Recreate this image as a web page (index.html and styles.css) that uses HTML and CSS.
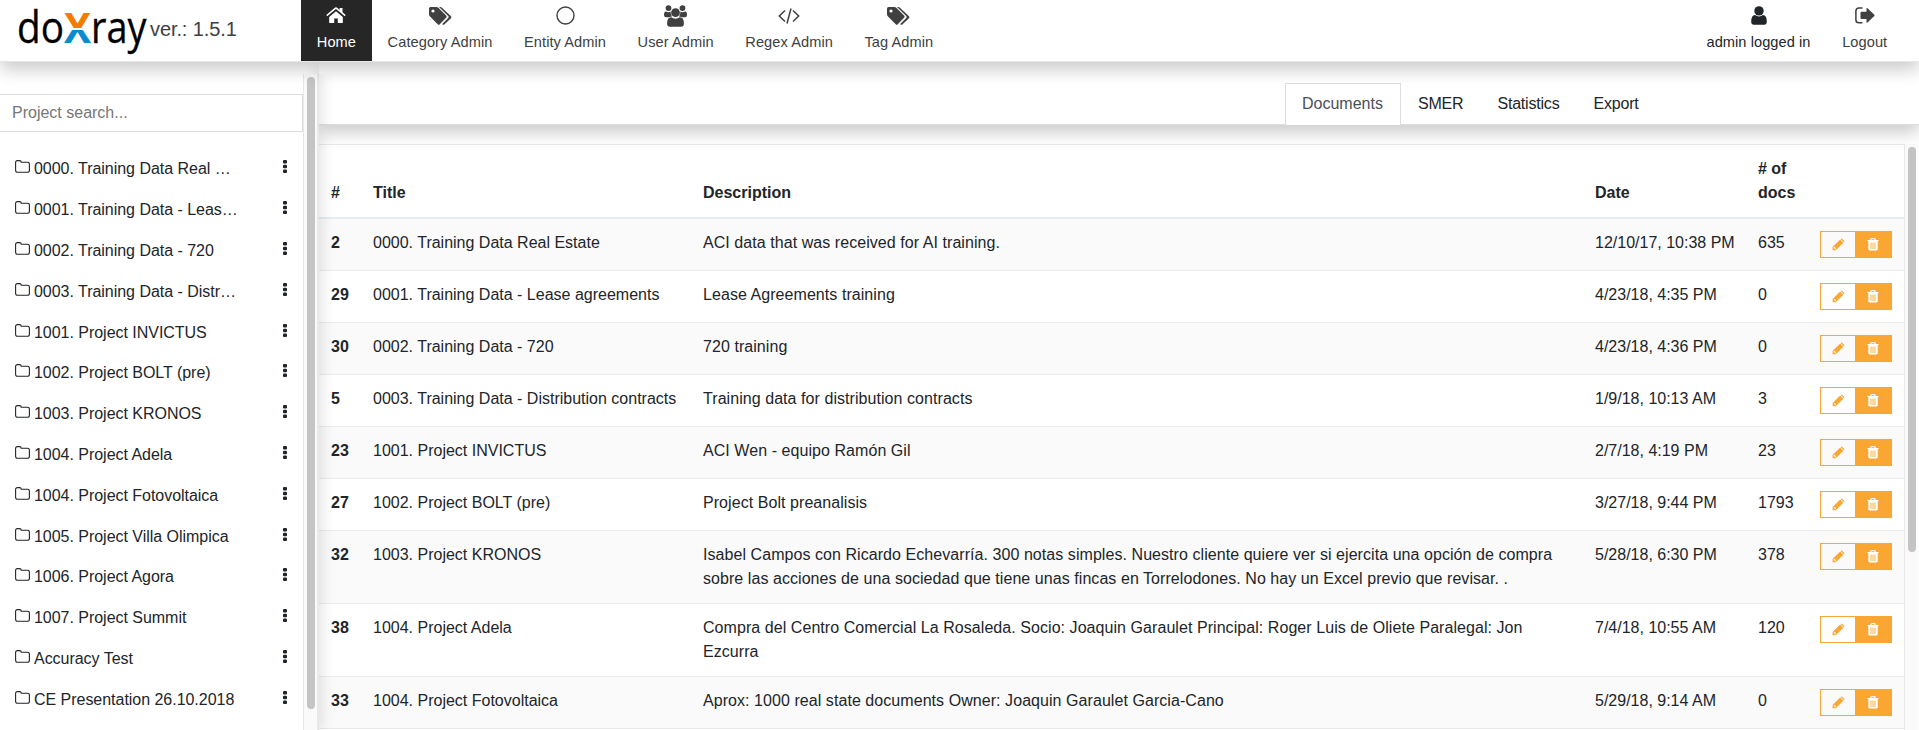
FILE: index.html
```html
<!DOCTYPE html>
<html lang="en">
<head>
<meta charset="utf-8">
<title>doXray</title>
<link rel="stylesheet" href="styles.css">
</head>
<body>
<svg class="sprite" aria-hidden="true">
  <symbol id="folder" viewBox="0 0 15 13"><path d="M.6 2.5Q.6.6 2.500.6H4.600Q6.200.6 6.200 2.300H12.300Q14.400 2.300 14.400 4.200V10.200Q14.400 12.300 12.300 12.300H2.600Q.6 12.300.6 10.200Z" fill="none" stroke="currentColor" stroke-width="1.100"/></symbol>
  <symbol id="dots" viewBox="0 0 4 13"><rect width="4" height="3.600" rx="1.100"/><rect y="4.700" width="4" height="3.600" rx="1.100"/><rect y="9.400" width="4" height="3.600" rx="1.100"/></symbol>
  <symbol id="home" viewBox="0 0 20 17"><path d="M10 4.200 3.200 10V15.400Q3.200 16 3.800 16H8.200V11.500H11.800V16H16.200Q16.800 16 16.800 15.400V10Z"/><path d="M10 .3Q10.600.3 11.200.8L13.600 2.900V1H16.500V5.300L19.700 8 18.800 9.200 10 2.100 1.200 9.200.3 8 8.800.8Q9.400.3 10 .3Z"/></symbol>
  <symbol id="tags" viewBox="0 0 23 18"><path fill-rule="evenodd" d="M1.500 0H7.400Q8.500 0 9.300.8L17.100 8.600Q18.100 9.700 17.100 10.700L10.800 17.200Q9.800 18.200 8.700 17.200L.8 9.300Q0 8.500 0 7.300V1.500Q0 0 1.500 0ZM4 2.400A1.600 1.600 0 1 0 4 5.600 1.600 1.600 0 1 0 4 2.400Z"/><path d="M10 0H11.200Q12.300.1 13.200.9L21.700 8.900Q23 10.200 21.900 11.300L15.600 17.300Q14.600 18.200 13.600 17.500L13.200 17.100 19.200 11Q20.100 10 19.200 9Z"/></symbol>
  <symbol id="circle" viewBox="0 0 19 19"><circle cx="9.500" cy="9.500" r="8.500" fill="none" stroke="currentColor" stroke-width="1.400"/></symbol>
  <symbol id="users" viewBox="0 0 23 22"><circle cx="4.500" cy="3.100" r="2.900"/><circle cx="18.500" cy="3.100" r="2.900"/><path d="M1.900 6.400Q4.500 8 6.600 6.500 6.300 9.500 8 11.500 6.500 11.600 5.400 12.300H2Q0 12.300 0 10 0 6.300 1.900 6.400ZM21.100 6.400Q18.500 8 16.400 6.500 16.700 9.500 15 11.500 16.500 11.600 17.600 12.300H21Q23 12.300 23 10 23 6.300 21.100 6.400Z"/><circle cx="11.500" cy="7.700" r="4.400"/><path d="M7.200 12.300Q11.500 15.200 15.800 12.300 19.900 12.300 19.900 18.500 19.900 21.800 17 21.800H6Q3.100 21.800 3.100 18.500 3.100 12.300 7.200 12.300Z"/></symbol>
  <symbol id="code" viewBox="0 0 22 16"><path d="M7 2.500 1.300 8 7 13.500M15 2.500 20.700 8 15 13.500M13 .5 9 15.500" fill="none" stroke="currentColor" stroke-width="1.500"/></symbol>
  <symbol id="user" viewBox="0 0 16 19"><circle cx="8" cy="4.900" r="4.700"/><path d="M4 9.100Q8 12 12 9.100 15.800 9.500 15.800 15.500 15.800 18.700 13 18.700H3Q.2 18.700.2 15.500.2 9.500 4 9.100Z"/></symbol>
  <symbol id="logout" viewBox="0 0 20 17"><path d="M7.500.9H4Q.9.900.9 4V12.700Q.9 15.800 4 15.800H7.500" fill="none" stroke="currentColor" stroke-width="1.500"/><path d="M5.500 5.500Q5.500 4.700 6.300 4.700H11.500V1.500Q11.500.5 12.500 1.200L19.300 7.700Q19.900 8.300 19.300 8.900L12.500 15.500Q11.500 16.200 11.500 15.200V12H6.300Q5.500 12 5.500 11.200Z"/></symbol>
  <symbol id="pencil" viewBox="0 0 13 13"><path fill-rule="evenodd" d="M.6 9.100 8.100 1.600 11.300 4.800 3.800 12.300H.6ZM1.700 9.500V10.200H2.700V11.200H3.400L4.100 10.500 2.400 8.800ZM8.800.9Q9.600.1 10.400.9L12 2.500Q12.800 3.300 12 4.100L11.900 4.200 8.700 1Z"/></symbol>
  <symbol id="trash" viewBox="0 0 12 13"><path d="M3.800 2V1.500Q3.800.6 4.700.6H7.300Q8.200.6 8.200 1.500V2M.5 2.500H11.500" fill="none" stroke="currentColor" stroke-width="1.200"/><path d="M1.300 3H10.700V11Q10.700 12.500 9.400 12.500H2.600Q1.300 12.500 1.300 11Z"/><path d="M3 4.500H9V11H3Z" fill="#fdd8a2"/></symbol>
</svg>

<header class="navbar">
  <div class="brand">
    <svg class="logo" width="134" height="61" viewBox="0 0 134 61">
      <defs><linearGradient id="split" gradientUnits="userSpaceOnUse" x1="0" y1="14" x2="0" y2="44">
        <stop offset=".46" stop-color="#f07d00"/><stop offset=".46" stop-color="#fff"/><stop offset=".53" stop-color="#fff"/><stop offset=".53" stop-color="#0a8bd0"/>
      </linearGradient></defs>
      <text class="logo-text" y="43"><tspan x="1" textLength="47" lengthAdjust="spacingAndGlyphs">do</tspan><tspan class="logo-x" x="48" textLength="27" lengthAdjust="spacingAndGlyphs">X</tspan><tspan x="75" textLength="55.500" lengthAdjust="spacingAndGlyphs">ray</tspan></text>
    </svg>
    <span class="version">ver.: 1.5.1</span>
  </div>
  <nav class="menu">
    <a class="item active"><svg width="20" height="17"><use href="#home"/></svg><span>Home</span></a>
    <a class="item"><svg width="23" height="18"><use href="#tags"/></svg><span>Category Admin</span></a>
    <a class="item"><svg width="19" height="19"><use href="#circle"/></svg><span>Entity Admin</span></a>
    <a class="item"><svg width="23" height="22"><use href="#users"/></svg><span>User Admin</span></a>
    <a class="item"><svg width="22" height="16"><use href="#code"/></svg><span>Regex Admin</span></a>
    <a class="item"><svg width="23" height="18"><use href="#tags"/></svg><span>Tag Admin</span></a>
  </nav>
  <nav class="menu account">
    <a class="item dark"><svg width="16" height="19"><use href="#user"/></svg><span>admin logged in</span></a>
    <a class="item"><svg width="20" height="17"><use href="#logout"/></svg><span>Logout</span></a>
  </nav>
</header>

<div class="page">
  <aside class="sidebar">
    <div class="projects">
      <input class="search" type="text" placeholder="Project search...">
      <ul class="project-list" id="projects"></ul>
    </div>
    <div class="track"><div class="thumb side-thumb"></div></div>
  </aside>
  <main class="content">
    <nav class="tabs"><a class="tab current">Documents</a><a class="tab">SMER</a><a class="tab">Statistics</a><a class="tab">Export</a></nav>
    <div class="table-area">
      <table class="docs">
        <colgroup><col class="c-id"><col class="c-title"><col class="c-desc"><col class="c-date"><col class="c-count"><col class="c-act"></colgroup>
        <thead><tr><th>#</th><th>Title</th><th>Description</th><th>Date</th><th># of docs</th><th></th></tr></thead>
        <tbody id="rows"></tbody>
      </table>
      <div class="track"><div class="thumb main-thumb"></div></div>
    </div>
  </main>
</div>
<script src="app.js"></script>
</body>
</html>
```
FILE: styles.css
```css
* { box-sizing: border-box; }
body { margin: 0; height: 730px; overflow: hidden; display: flex; flex-direction: column; font: 16px/24px "Liberation Sans", Arial, sans-serif; color: #212529; background: #fff; }
svg { fill: currentColor; display: block; }
.sprite { display: none; }

.navbar { position: relative; z-index: 3; flex: none; display: flex; height: 62px; background: #fff; border-bottom: 1px solid #e7e7e7; box-shadow: 0 8px 16px rgba(0, 0, 0, .2); }
.brand { display: flex; width: 301px; padding-left: 16px; }
.logo { flex: none; overflow: visible; }
.logo-text { font: 43px "Open Sans", sans-serif; fill: #000; stroke: #000; stroke-width: .3px; }
.logo-x { font-weight: bold; font-size: 41px; fill: url(#split); stroke: none; }
.version { font-size: 20px; line-height: 58px; letter-spacing: -.1px; color: #404040; }
.menu { display: flex; }
.account { margin-left: auto; padding-right: 16px; }
.item { display: flex; flex-direction: column; height: 61px; padding: 0 15.800px; font-size: 14.600px; letter-spacing: .07px; color: #404040; }
.item svg { margin: auto; }
.item span { height: 30px; line-height: 22px; }
.item.active { background: #262626; color: #fff; }
.item.dark { color: #212529; }

.page { flex: 1; min-height: 0; display: flex; }
.sidebar { position: relative; z-index: 2; flex: none; display: flex; width: 319px; margin-top: 12px; border-right: 2px solid #e8e8e8; box-shadow: 4px 0 12px rgba(0, 0, 0, .1); clip-path: inset(0 -20px 0 0); background: #fff; }
.projects { width: 303px; padding-top: 20px; }
.search { display: block; width: 303px; height: 38px; padding: 0 12px; border: 1px solid #ddd; border-left: 0; font: inherit; color: #777; }
.search::placeholder { color: #777; }
.project-list { list-style: none; margin: 0; padding: 17px 16px 0 15px; }
.project { display: flex; align-items: center; height: 40.800px; }
.project span { margin-left: 4px; letter-spacing: -.03px; }
.project .dots { margin: -5px 0 0 auto; }
.project .folder { margin-top: -5px; }
.track { flex: none; width: 14px; padding-top: 3px; background: #fafafa; border-left: 1px solid #e8e8e8; }
.thumb { width: 8px; margin-left: 3px; border-radius: 4px; background: #c4c4c4; }
.side-thumb { height: 632px; }
.main-thumb { height: 405px; }

.content { flex: 1; min-width: 0; display: flex; flex-direction: column; }
.tabs { position: relative; z-index: 1; flex: none; display: flex; align-items: flex-end; height: 63px; padding-left: 966px; border-bottom: 1px solid #ddd; background: #fff; box-shadow: 0 8px 16px rgba(0, 0, 0, .2); }
.tab { height: 41px; padding: 8px 16px; border: 1px solid transparent; }
.tab.current { width: 116px; white-space: nowrap; height: 42px; margin-bottom: -1px; border-color: #ddd; border-bottom: 0; background: #fff; color: #495057; }
.tab:not(.current) { letter-spacing: -.2px; }
.table-area { flex: 1; min-height: 0; margin-top: 19px; display: flex; align-items: stretch; overflow: hidden; }
.docs { flex: none; align-self: flex-start; width: 1585px; table-layout: fixed; border-spacing: 0; border-top: 1px solid #e9ecef; }
.c-id { width: 42px; } .c-title { width: 330px; } .c-desc { width: 892px; } .c-date { width: 163px; } .c-count { width: 62px; } .c-act { width: 96px; }
.docs th, .docs td { padding: 12px 12px 0; text-align: left; vertical-align: top; border-bottom: 1px solid #e9ecef; }
.docs thead th { height: 74px; padding-bottom: 12px; vertical-align: bottom; border-bottom-width: 2px; }
.docs tbody tr { height: 52px; }
.docs tbody tr.tall { height: 73px; }
.docs tbody tr:nth-child(odd) { background: #fafafa; }
.docs .nowrap { white-space: nowrap; }
.docs .desc { letter-spacing: .06px; }
.actions { display: flex; height: 27px; width: 72px; border: 1px solid #faa632; color: #faa632; }
.actions span { flex: 0 0 34px; display: flex; align-items: center; justify-content: center; }
.actions .delete { flex: 1; background: #faa632; color: #fff; }
```
FILE: app.js
```js
const projects = ["0000. Training Data Real …", "0001. Training Data - Leas…", "0002. Training Data - 720", "0003. Training Data - Distr…", "1001. Project INVICTUS", "1002. Project BOLT (pre)", "1003. Project KRONOS", "1004. Project Adela", "1004. Project Fotovoltaica", "1005. Project Villa Olimpica", "1006. Project Agora", "1007. Project Summit", "Accuracy Test", "CE Presentation 26.10.2018"];
document.getElementById("projects").innerHTML = projects.map(p => `<li class="project"><svg class="folder" width="15" height="13"><use href="#folder"/></svg><span>${p}</span><svg class="dots" width="4" height="13"><use href="#dots"/></svg></li>`).join("");

const rows = [
  [2, "0000. Training Data Real Estate", "ACI data that was received for AI training.", "12/10/17, 10:38 PM", 635],
  [29, "0001. Training Data - Lease agreements", "Lease Agreements training", "4/23/18, 4:35 PM", 0],
  [30, "0002. Training Data - 720", "720 training", "4/23/18, 4:36 PM", 0],
  [5, "0003. Training Data - Distribution contracts", "Training data for distribution contracts", "1/9/18, 10:13 AM", 3],
  [23, "1001. Project INVICTUS", "ACI Wen - equipo Ramón Gil", "2/7/18, 4:19 PM", 23],
  [27, "1002. Project BOLT (pre)", "Project Bolt preanalisis", "3/27/18, 9:44 PM", 1793],
  [32, "1003. Project KRONOS", "Isabel Campos con Ricardo Echevarría. 300 notas simples. Nuestro cliente quiere ver si ejercita una opción de compra<br>sobre las acciones de una sociedad que tiene unas fincas en Torrelodones. No hay un Excel previo que revisar. .", "5/28/18, 6:30 PM", 378],
  [38, "1004. Project Adela", "Compra del Centro Comercial La Rosaleda. Socio: Joaquin Garaulet Principal: Roger Luis de Oliete Paralegal: Jon<br>Ezcurra", "7/4/18, 10:55 AM", 120],
  [33, "1004. Project Fotovoltaica", "Aprox: 1000 real state documents Owner: Joaquin Garaulet Garcia-Cano", "5/29/18, 9:14 AM", 0]
];
document.getElementById("rows").innerHTML = rows.map(([id, title, desc, date, count]) => `<tr class="${desc.includes("<br>") ? "tall" : ""}"><th>${id}</th><td class="nowrap">${title}</td><td class="nowrap desc">${desc}</td><td class="nowrap">${date}</td><td class="nowrap">${count}</td><td><div class="actions"><span><svg width="13" height="13"><use href="#pencil"/></svg></span><span class="delete"><svg width="12" height="13"><use href="#trash"/></svg></span></div></td></tr>`).join("");
```
